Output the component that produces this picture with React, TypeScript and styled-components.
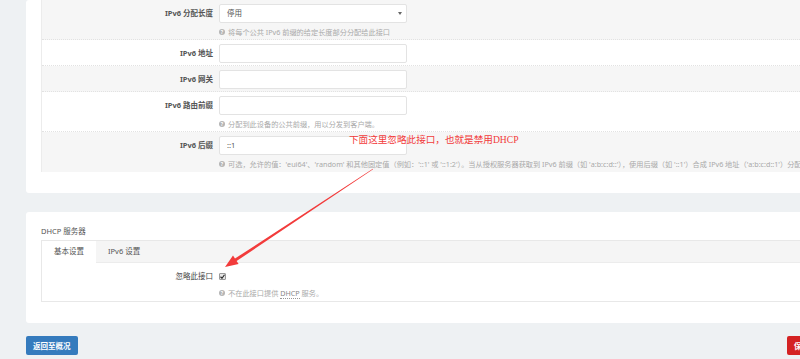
import React from "react";
import styled, { createGlobalStyle, css } from "styled-components";

const GlobalStyle = createGlobalStyle`
  html, body {
    margin: 0;
    background: #eef1f3;
    font-family: "Noto Sans", "Noto Sans CJK SC", sans-serif;
    color: #555;
    overflow: hidden;
  }
`;

const Page = styled.main`
  position: relative;
  width: 800px;
  height: 359px;
  overflow: hidden;
  padding-left: 26px;
  box-sizing: border-box;
  font-size: 7.5px;
`;

const Column = styled.div`
  width: 790px;
`;

const Card = styled.section<{ $top?: number }>`
  background: #ffffff;
  border-radius: 3px;
  margin-top: ${(p) => p.$top ?? 0}px;
  padding: ${(p) => (p.$top ? "14px" : "0")} 0 21px 15px;
`;

const Fieldset = styled.div`
  border-left: 1px solid #ececec;
`;

const Row = styled.div<{ $alt?: boolean; $last?: boolean }>`
  display: grid;
  grid-template-columns: 171px 1fr;
  column-gap: 6px;
  padding: 4px 0 ${(p) => (p.$last ? 3 : 2)}px;
  background: ${(p) => (p.$alt ? "#f6f6f6" : "transparent")};
  ${(p) =>
    !p.$last &&
    css`
      border-bottom: 1px dotted #e2e2e2;
    `}
`;

const Label = styled.label<{ $plain?: boolean }>`
  text-align: right;
  font-size: 7.5px;
  line-height: 19px;
  height: 19px;
  font-weight: ${(p) => (p.$plain ? 400 : 700)};
  color: ${(p) => (p.$plain ? "#444" : "#555")};
  white-space: nowrap;
`;

const Field = styled.div`
  min-width: 0;
  display: flex;
  flex-direction: column;
  align-items: flex-start;
`;

const Input = styled.div`
  width: 188px;
  height: 19px;
  box-sizing: border-box;
  border: 1px solid #e3e3e3;
  border-radius: 2px;
  background: #fff;
  font-size: 7.5px;
  line-height: 17px;
  padding: 0 7px;
  color: #555;
  position: relative;
`;

const Caret = styled.span`
  position: absolute;
  right: 4px;
  top: 7px;
  border-left: 2px solid transparent;
  border-right: 2px solid transparent;
  border-top: 3px solid #666;
`;

const Help = styled.div`
  margin-top: 4px;
  height: 10px;
  font-size: 7.2px;
  line-height: 10px;
  color: #a9a9a9;
  white-space: nowrap;
  display: flex;
  align-items: center;
  gap: 2px;
`;

const HelpIcon = styled.span`
  display: inline-flex;
  align-items: center;
  justify-content: center;
  flex: none;
  width: 6px;
  height: 6px;
  border-radius: 50%;
  background: #b5b5b5;
  color: #fff;
  font-size: 5px;
  font-weight: 700;
  line-height: 1;
  margin-right: 1px;
`;

const Abbr = styled.span`
  border-bottom: 1px dotted #999;
  color: #888;
`;

const Title = styled.h3`
  margin: 0 0 4px;
  font-size: 7.5px;
  line-height: 10px;
  font-weight: 400;
  color: #555;
`;

const TabBox = styled.div`
  border: 1px solid #e8e8e8;
`;

const TabBar = styled.div`
  display: flex;
  height: 21px;
  background: #f5f5f5;
  border-bottom: 1px solid #ececec;
`;

const Tab = styled.div<{ $active?: boolean }>`
  padding: 0 12px;
  font-size: 7.5px;
  line-height: 21px;
  color: #555;
  background: ${(p) => (p.$active ? "#fff" : "transparent")};
  height: ${(p) => (p.$active ? "22px" : "21px")};
`;

const Checkbox = styled.span`
  display: flex;
  align-items: center;
  justify-content: center;
  margin: 6px 0 4px;
  width: 7px;
  height: 7px;
  box-sizing: border-box;
  border: 1px solid #9a9a9a;
  border-radius: 1px;
  background: #e6e6e6;
`;

const Actions = styled.div`
  display: flex;
  justify-content: space-between;
  margin-top: 13px;
`;

const Button = styled.button<{ $tone: string }>`
  height: 19px;
  border: 0;
  border-radius: 2px;
  padding: 0 7px;
  background: ${(p) => p.$tone};
  color: #fff;
  font-family: inherit;
  font-size: 7.5px;
  font-weight: 700;
`;

const Note = styled.div`
  position: absolute;
  left: 349px;
  top: 134px;
  font-family: "Liberation Serif", "Noto Sans CJK SC", serif;
  font-size: 9.6px;
  line-height: 12px;
  color: #f23b3b;
  white-space: nowrap;
`;

const Overlay = styled.svg`
  position: absolute;
  left: 0;
  top: 0;
  pointer-events: none;
`;

function HelpLine({ children }: { children: React.ReactNode }) {
  return (
    <Help>
      <HelpIcon>?</HelpIcon>
      <span>{children}</span>
    </Help>
  );
}

export default function App() {
  return (
    <>
      <GlobalStyle />
      <Page>
        <Column>
          <Card>
            <Fieldset>
              <Row $alt>
                <Label>IPv6 分配长度</Label>
                <Field>
                  <Input>
                    停用
                    <Caret />
                  </Input>
                  <HelpLine>将每个公共 IPv6 前缀的给定长度部分分配给此接口</HelpLine>
                </Field>
              </Row>
              <Row>
                <Label>IPv6 地址</Label>
                <Field>
                  <Input />
                </Field>
              </Row>
              <Row $alt>
                <Label>IPv6 网关</Label>
                <Field>
                  <Input />
                </Field>
              </Row>
              <Row>
                <Label>IPv6 路由前缀</Label>
                <Field>
                  <Input />
                  <HelpLine>分配到此设备的公共前缀，用以分发到客户端。</HelpLine>
                </Field>
              </Row>
              <Row $alt $last>
                <Label>IPv6 后缀</Label>
                <Field>
                  <Input>::1</Input>
                  <HelpLine>
                    可选，允许的值：'eui64'、'random' 和其他固定值（例如：'::1' 或 '::1:2'）。当从授权服务器获取到 IPv6 前缀（如 'a:b:c:d::'），使用后缀（如 '::1'）合成 IPv6 地址（'a:b:c:d::1'）分配给此接口。
                  </HelpLine>
                </Field>
              </Row>
            </Fieldset>
          </Card>

          <Card $top={19}>
            <Title>DHCP 服务器</Title>
            <TabBox>
              <TabBar>
                <Tab $active>基本设置</Tab>
                <Tab>IPv6 设置</Tab>
              </TabBar>
              <Row $last>
                <Label $plain>忽略此接口</Label>
                <Field>
                  <Checkbox>
                    <svg width="5" height="5" viewBox="0 0 10 10">
                      <path d="M1 5.5 L4 8.5 L9 1.5" fill="none" stroke="#222" strokeWidth="2.2" />
                    </svg>
                  </Checkbox>
                  <HelpLine>
                    不在此接口提供 <Abbr>DHCP</Abbr> 服务。
                  </HelpLine>
                </Field>
              </Row>
            </TabBox>
          </Card>

          <Actions>
            <Button $tone="#357bbd">返回至概况</Button>
            <Button $tone="#d42222">保存</Button>
          </Actions>
        </Column>

        <Note>下面这里忽略此接口，也就是禁用DHCP</Note>
        <Overlay width="800" height="359" viewBox="0 0 800 359">
          <polygon
            points="373.1,169.2 236.6,261.05 238.6,264 225,267 233,255.6 235,258.55 372.9,168.8"
            fill="#f23b3b"
          />
        </Overlay>
      </Page>
    </>
  );
}
